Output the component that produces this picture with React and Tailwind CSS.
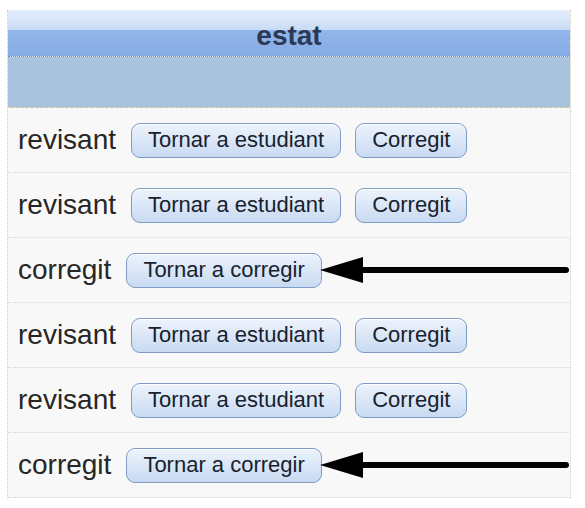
import React from 'react';

const rows = [
  { estat: 'revisant' },
  { estat: 'revisant' },
  { estat: 'corregit', arrow: true },
  { estat: 'revisant' },
  { estat: 'revisant' },
  { estat: 'corregit', arrow: true },
];

function Btn({ children }) {
  return (
    <button className="h-[35px] px-[16px] rounded-[9px] border border-[#7f9cc4] bg-[linear-gradient(to_bottom,#edf3fc,#c8daf2)] text-[22px] leading-none text-[#18212e] shadow-[inset_0_1px_0_#ffffff] shrink-0">
      {children}
    </button>
  );
}

function Arrow() {
  return (
    <svg width="250" height="30" viewBox="0 0 250 30" className="shrink-0 ml-[9px]">
      <path d="M0 15 L43 2 L43 28 Z" fill="#000" />
      <line x1="38" y1="15" x2="246" y2="15" stroke="#000" strokeWidth="6" strokeLinecap="round" />
    </svg>
  );
}

export default function App() {
  return (
    <div className="w-[585px] h-[508px] bg-white pt-[10px] pl-[7px] font-['Liberation_Sans',Arial,sans-serif]">
      <div className="w-[564px] border-x border-dotted border-[#cfcab8]">
        {/* header */}
        <div className="h-[47px] flex items-center justify-center pt-[6px] border-b border-dotted border-[#6f86a8] bg-[linear-gradient(to_bottom,#e4eefb_0%,#c9dcf5_43%,#93b6ea_43%,#86ace6_100%)]">
          <span className="text-[28px] font-bold text-[#2b3954] leading-none">estat</span>
        </div>
        {/* filter row */}
        <div className="h-[51px] bg-[#a9c2de] border-b border-dashed border-[#e6d59c]" />
        {rows.map((r, i) => (
          <div key={i} className="h-[65px] flex items-center pl-[10px] bg-[#f8f8f8] border-b border-dotted border-[#ddd6be]">
            <span className="text-[28px] text-[#262626] leading-none">{r.estat}</span>
            <div className="flex items-center gap-[14px] ml-[15px]">
              {r.arrow ? (
                <Btn>Tornar a corregir</Btn>
              ) : (
                <>
                  <Btn>Tornar a estudiant</Btn>
                  <Btn>Corregit</Btn>
                </>
              )}
            </div>
            {r.arrow && <Arrow />}
          </div>
        ))}
      </div>
    </div>
  );
}
